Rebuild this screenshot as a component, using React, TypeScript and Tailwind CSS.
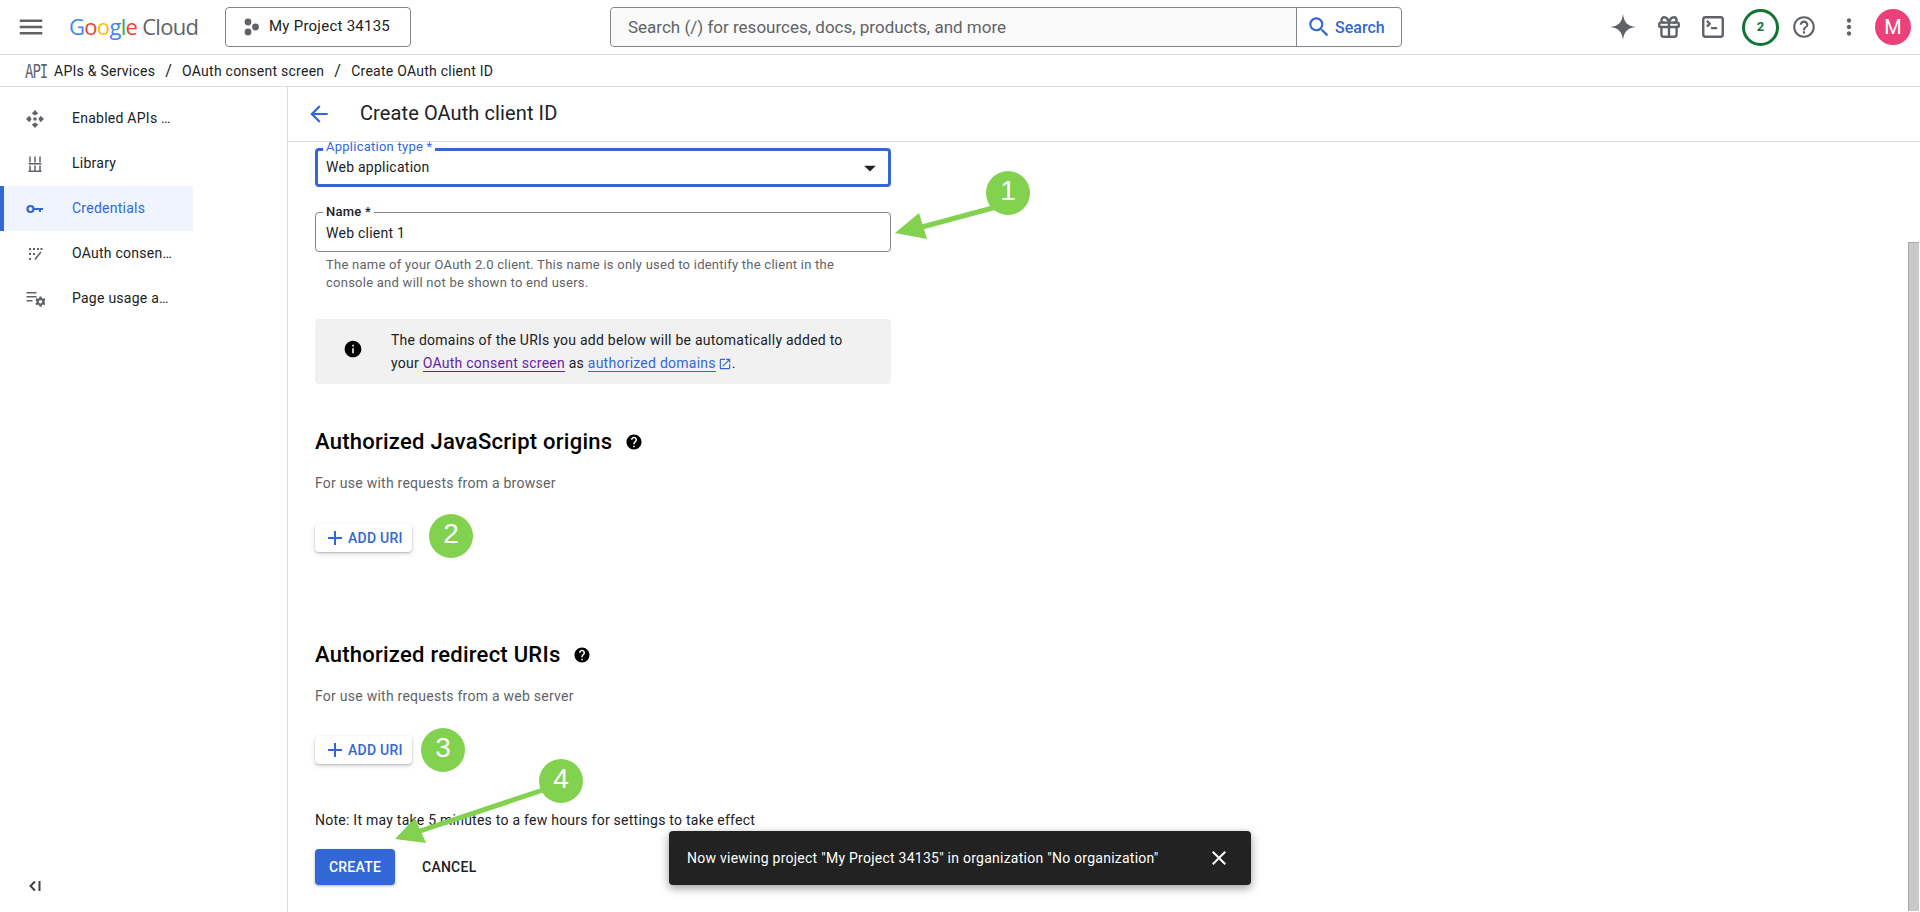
import { Gift, SquareTerminal } from "lucide-react";
import {
  MdAdd,
  MdArrowBack,
  MdArrowDropDown,
  MdClose,
  MdHelp,
  MdInfo,
  MdMenu,
  MdMoreVert,
  MdOpenInNew,
  MdOutlineHelpOutline,
  MdSearch,
} from "react-icons/md";

const EnabledIcon = () => (
  <svg width="20" height="20" viewBox="0 0 20 20" fill="#5f6368">
    <path d="M10 1 13.2 4.4 10 6.6 6.8 4.4Z" />
    <path d="M10 19 6.8 15.6 10 13.4 13.2 15.6Z" />
    <path d="M1 10 4.4 6.8 6.6 10 4.4 13.2Z" />
    <path d="M19 10 15.6 13.2 13.4 10 15.6 6.8Z" />
    <circle cx="10" cy="10" r="1.8" />
  </svg>
);

const LibraryIcon = () => (
  <svg width="20" height="20" viewBox="0 0 20 20" fill="none" stroke="#5f6368" strokeWidth="1.5">
    <path d="M5 2.5v6M10 2.5v6M15 2.5v6M5 11.5v6M10 11.5v6M15 11.5v6M3.5 9.7h13M3.5 17.3h13" />
  </svg>
);

const KeyIcon = () => (
  <svg width="20" height="20" viewBox="0 0 20 20" fill="none">
    <circle cx="5.5" cy="10" r="3" stroke="#3367d6" strokeWidth="2.2" />
    <path d="M8.5 9h9.5v2h-2v2h-2v-2h-5.5z" fill="#3367d6" />
  </svg>
);

const ConsentIcon = () => (
  <svg width="20" height="20" viewBox="0 0 20 20" fill="#5f6368">
    <rect x="4" y="4" width="2" height="2" />
    <rect x="8" y="4" width="2" height="2" />
    <rect x="12" y="4" width="2" height="2" />
    <rect x="15.5" y="4" width="2" height="2" />
    <rect x="4" y="9" width="2" height="2" />
    <rect x="8" y="9" width="2" height="2" />
    <rect x="4" y="14" width="2" height="2" />
    <path d="M16.5 8.5 10.5 16l-1.2-1 6-7.5z" />
  </svg>
);

const UsageIcon = () => (
  <svg width="20" height="20" viewBox="0 0 20 20" fill="#5f6368">
    <path d="M1.5 3h10v1.4h-10zM1.5 7h10v1.4h-10zM1.5 11h6v1.4h-6z" />
    <path
      fillRule="evenodd"
      d="M14.5 7.5h2l.3 1.5 1.4.7 1.4-.6 1 1.8-1.1 1v1.5l1.1 1-1 1.8-1.4-.6-1.4.7-.3 1.5h-2l-.3-1.5-1.4-.7-1.4.6-1-1.8 1.1-1v-1.5l-1.1-1 1-1.8 1.4.6 1.4-.7zM15.5 11a1.7 1.7 0 1 0 0 3.4 1.7 1.7 0 0 0 0-3.4z"
    />
  </svg>
);

const navItems = [
  { label: "Enabled APIs …", icon: <EnabledIcon /> },
  { label: "Library", icon: <LibraryIcon /> },
  { label: "Credentials", icon: <KeyIcon />, active: true },
  { label: "OAuth consen…", icon: <ConsentIcon /> },
  { label: "Page usage a…", icon: <UsageIcon /> },
];

const AddUri = () => (
  <button className="flex h-[28px] w-[97px] items-center rounded bg-white pl-[8px] text-sm font-medium text-[#3367d6] shadow-[0_1px_2px_rgba(60,64,67,0.3),0_2px_5px_rgba(60,64,67,0.15)]">
    <MdAdd size={24} className="mr-[1px]" />
    ADD URI
  </button>
);

const Marker = ({ n, className }: { n: number; className: string }) => (
  <div
    className={`absolute flex h-[44px] w-[44px] items-center justify-center rounded-full bg-[#82d14f] pb-[4px] font-['Liberation_Sans',sans-serif] text-[28px] tracking-normal text-white ${className}`}
  >
    {n}
  </div>
);

export default function App() {
  return (
    <div className="relative flex h-[912px] w-[1920px] flex-col overflow-hidden bg-white font-['Roboto',sans-serif] text-sm tracking-[0.25px] text-[#202124]">
      {/* top bar */}
      <header className="flex h-[55px] shrink-0 items-center border-b border-[#dadce0]">
        <MdMenu size={30} className="ml-[16px] text-[#5f6368]" />
        <div className="ml-[23px] flex w-[132px] items-baseline font-['Open_Sans',sans-serif] text-[22px] tracking-[-0.7px]">
          <span className="text-[#4285f4]">G</span>
          <span className="text-[#ea4335]">o</span>
          <span className="text-[#fbbc05]">o</span>
          <span className="text-[#4285f4]">g</span>
          <span className="text-[#34a853]">l</span>
          <span className="text-[#ea4335]">e</span>
          <span className="ml-[5px] text-[#5f6368]">Cloud</span>
        </div>
        <button className="ml-[24px] flex h-[40px] w-[186px] items-center rounded border border-[#80868b] pl-[17px] text-[15px]">
          <svg width="16" height="18" viewBox="0 0 16 18" fill="#5f6368">
            <circle cx="5" cy="4" r="3.4" />
            <circle cx="5" cy="14" r="3.4" />
            <circle cx="12.5" cy="9" r="3.4" />
          </svg>
          <span className="ml-[10px]">My Project 34135</span>
        </button>
        <div className="ml-[199px] flex h-[40px] w-[792px] items-center rounded border border-[#80868b]">
          <div className="flex h-full w-[685px] items-center rounded-l bg-[#fafafa] pt-[1px] pl-[17px] text-[17px] tracking-normal text-[#5f6368]">
            Search (/) for resources, docs, products, and more
          </div>
          <div className="flex h-full flex-1 items-center border-l border-[#80868b] pl-[9px] text-[16px] font-medium tracking-normal text-[#3367d6]">
            <MdSearch size={26} className="mr-[3px]" />
            <span className="pt-[2px]">Search</span>
          </div>
        </div>
        <svg width="28" height="28" viewBox="0 0 28 28" fill="#5f6368" className="ml-[207px]">
          <path d="M14 1c1 8 4 12 13 13-9 1-12 5-13 13-1-8-4-12-13-13 9-1 12-5 13-13z" />
        </svg>
        <Gift size={26} strokeWidth={2.2} className="ml-[19px] text-[#5f6368]" />
        <SquareTerminal size={26} strokeWidth={2.2} className="ml-[18px] text-[#5f6368]" />
        <div className="ml-[16px] flex h-[37px] w-[37px] items-center justify-center rounded-full border-[3px] border-[#137333] text-[13px] font-bold text-[#137333]">
          2
        </div>
        <MdOutlineHelpOutline size={26} className="ml-[12px] text-[#5f6368]" />
        <MdMoreVert size={26} className="ml-[19px] text-[#5f6368]" />
        <div className="ml-[13px] flex h-[36px] w-[36px] items-center justify-center rounded-full bg-[#ec407a] text-[20px] tracking-normal text-white">
          M
        </div>
      </header>

      {/* breadcrumb */}
      <nav className="flex h-[32px] shrink-0 items-center border-b border-[#dadce0] pl-[25px]">
        <span className="w-[29px] origin-center scale-y-[1.4] font-['DejaVu_Sans_Mono',monospace] text-[14px] leading-none tracking-[-1px] text-[#5f6368]">
          API
        </span>
        <span>APIs &amp; Services</span>
        <span className="mx-[10px] text-base">/</span>
        <span>OAuth consent screen</span>
        <span className="mx-[10px] text-base">/</span>
        <span>Create OAuth client ID</span>
      </nav>

      <div className="flex min-h-0 flex-1">
        {/* sidebar */}
        <aside className="flex w-[288px] shrink-0 flex-col border-r border-[#dadce0] pt-[9px]">
          {navItems.map((item) => (
            <div
              key={item.label}
              className={`flex h-[45px] w-[193px] items-center border-l-4 pl-[21px] ${
                item.active ? "border-[#3367d6] bg-[#e8f0fe]/70 text-[#3367d6]" : "border-transparent"
              }`}
            >
              <span className="flex w-[47px]">{item.icon}</span>
              <span className="pb-[2px]">{item.label}</span>
            </div>
          ))}
          <div className="mt-auto mb-[20px] flex items-center pl-[28px] text-[#3c4043]">
            <svg width="14" height="12" viewBox="0 0 14 12" fill="none" stroke="currentColor" strokeWidth="2">
              <path d="M7 1.5 2.5 6 7 10.5M11.5 1v10" />
            </svg>
          </div>
        </aside>

        <main className="flex min-w-0 flex-1 flex-col">
          <div className="flex h-[55px] shrink-0 items-center border-b border-[#dadce0] pl-[18px]">
            <MdArrowBack size={26} className="text-[#3367d6]" />
            <h1 className="ml-[28px] pb-[1px] text-[20px] tracking-[0.1px] text-[#202124]">Create OAuth client ID</h1>
          </div>

          <div className="flex min-h-0 flex-1">
            <div className="min-w-0 flex-1 overflow-hidden pt-[6px] pl-[27px]">
              {/* application type */}
              <div className="relative flex h-[39px] w-[576px] items-center justify-between rounded border-[3px] border-[#3367d6] pr-[4px] pl-[8px]">
                <span className="absolute top-[-11px] left-[5px] bg-white px-[3px] text-[13px] leading-[14px] text-[#3367d6]">
                  Application type *
                </span>
                <span className="pb-[1px]">Web application</span>
                <MdArrowDropDown size={28} className="text-[#202124]" />
              </div>

              {/* name */}
              <div className="relative mt-[25px] flex h-[40px] w-[576px] items-center rounded border border-[#80868b] pl-[10px]">
                <span className="absolute top-[-8px] left-[7px] bg-white px-[3px] text-[13px] leading-[14px] font-medium">
                  Name *
                </span>
                <span className="pt-[2px]">Web client 1</span>
              </div>
              <p className="mt-[4px] w-[560px] pl-[11px] text-[13px] leading-[18px] text-[#5f6368]">
                The name of your OAuth 2.0 client. This name is only used to identify the client in the console and will
                not be shown to end users.
              </p>

              {/* info box */}
              <div className="mt-[27px] flex h-[65px] w-[576px] items-center rounded bg-[#f1f1f1] pl-[28px]">
                <MdInfo size={20} className="mb-[6px] shrink-0 text-[#000]" />
                <p className="ml-[28px] leading-[23px]">
                  The domains of the URIs you add below will be automatically added to
                  <br />
                  your <span className="border-b border-[#681da8] text-[#681da8]">OAuth consent screen</span> as{" "}
                  <span className="border-b border-[#3367d6] text-[#3367d6]">authorized domains</span>
                  <MdOpenInNew size={14} className="ml-[2px] inline text-[#3367d6]" />.
                </p>
              </div>

              {/* javascript origins */}
              <div className="mt-[44px] flex h-[28px] items-center">
                <h2 className="text-[22px] font-medium text-[#000]">Authorized JavaScript origins</h2>
                <MdHelp size={18} className="ml-[13px] text-[#000]" />
              </div>
              <p className="mt-[17px] leading-5 text-[#5f6368]">For use with requests from a browser</p>
              <div className="mt-[31px]">
                <AddUri />
              </div>

              {/* redirect uris */}
              <div className="mt-[89px] flex h-[28px] items-center">
                <h2 className="text-[22px] font-medium text-[#000]">Authorized redirect URIs</h2>
                <MdHelp size={18} className="ml-[13px] text-[#000]" />
              </div>
              <p className="mt-[17px] leading-5 text-[#5f6368]">For use with requests from a web server</p>
              <div className="mt-[30px]">
                <AddUri />
              </div>

              <p className="mt-[46px] leading-5">Note: It may take 5 minutes to a few hours for settings to take effect</p>
              <div className="mt-[19px] flex items-center">
                <button className="h-[36px] w-[80px] rounded bg-[#3367d6] text-sm font-medium text-white shadow-[0_1px_3px_rgba(60,64,67,0.4)]">
                  CREATE
                </button>
                <button className="ml-[27px] text-sm font-medium text-[#202124]">CANCEL</button>
              </div>
            </div>

            <div className="w-[12px] shrink-0 pt-[100px] pb-[1px]">
              <div className="h-full w-[11px] border-t border-l border-[#a8a8a8] bg-[#c8c8c8]" />
            </div>
          </div>
        </main>
      </div>

      {/* snackbar */}
      <div className="absolute top-[831px] left-[669px] flex h-[54px] w-[582px] items-center justify-between rounded bg-[#222222] pr-[20px] pl-[18px] text-white shadow-[0_3px_10px_rgba(0,0,0,0.4)]">
        <span>Now viewing project "My Project 34135" in organization "No organization"</span>
        <MdClose size={24} />
      </div>

      {/* tutorial annotations */}
      <svg width="1920" height="912" className="pointer-events-none absolute top-0 left-0" fill="#82d14f" stroke="none">
        <path d="M1000 206 922 227" stroke="#82d14f" strokeWidth="5" />
        <polygon points="895,233 919,213 927,239" />
        <path d="M543 790 420 831" stroke="#82d14f" strokeWidth="5" />
        <polygon points="395,839 415,818 426,843" />
      </svg>
      <Marker n={1} className="top-[171px] left-[986px]" />
      <Marker n={2} className="top-[514px] left-[429px]" />
      <Marker n={3} className="top-[728px] left-[421px]" />
      <Marker n={4} className="top-[759px] left-[539px]" />
    </div>
  );
}
